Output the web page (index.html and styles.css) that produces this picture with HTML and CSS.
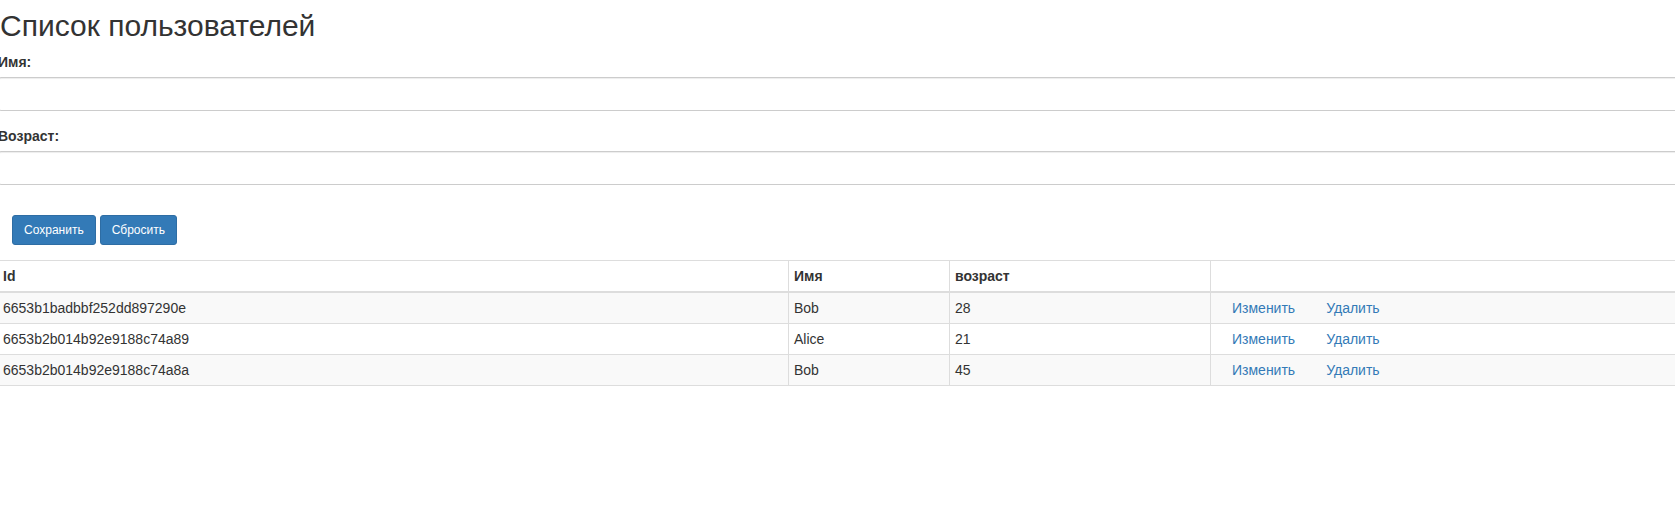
FILE: index.html
```html
<!DOCTYPE html>
<html lang="ru">
<head>
<meta charset="utf-8">
<title>Список пользователей</title>
<link rel="stylesheet" href="styles.css">
</head>
<body>
<div class="page">
  <h2 class="title">Список пользователей</h2>
  <form class="user-form">
    <div class="form-group">
      <label class="form-label" for="name">Имя:</label>
      <input class="form-control" id="name" type="text">
    </div>
    <div class="form-group">
      <label class="form-label" for="age">Возраст:</label>
      <input class="form-control" id="age" type="text">
    </div>
    <div class="actions">
      <button type="button" class="btn">Сохранить</button>
      <button type="button" class="btn">Сбросить</button>
    </div>
  </form>
  <table class="users">
    <thead>
      <tr>
        <th class="col-id">Id</th>
        <th class="col-name">Имя</th>
        <th class="col-age">возраст</th>
        <th class="col-act"></th>
      </tr>
    </thead>
    <tbody>
      <tr>
        <td>6653b1badbbf252dd897290e</td>
        <td>Bob</td>
        <td>28</td>
        <td class="links"><a href="#" class="link">Изменить</a><a href="#" class="link">Удалить</a></td>
      </tr>
      <tr>
        <td>6653b2b014b92e9188c74a89</td>
        <td>Alice</td>
        <td>21</td>
        <td class="links"><a href="#" class="link">Изменить</a><a href="#" class="link">Удалить</a></td>
      </tr>
      <tr>
        <td>6653b2b014b92e9188c74a8a</td>
        <td>Bob</td>
        <td>45</td>
        <td class="links"><a href="#" class="link">Изменить</a><a href="#" class="link">Удалить</a></td>
      </tr>
    </tbody>
  </table>
</div>
</body>
</html>
```

FILE: styles.css
```css
html, body {
  margin: 0;
  padding: 0;
  overflow: hidden;
  background: #fff;
}

body {
  font-family: "Liberation Sans", Arial, sans-serif;
  font-size: 14px;
  line-height: 20px;
  color: #333;
}

.page {
  margin: 0 -12px 0 -3px;
}

.title {
  font-size: 30px;
  font-weight: 500;
  line-height: 33px;
  margin: 9px 0 10px 3px;
}

.form-group {
  margin-bottom: 15px;
}

.form-label {
  display: block;
  font-weight: bold;
  margin: 0 0 5px 1px;
}

.form-control {
  display: block;
  box-sizing: border-box;
  width: 100%;
  height: 34px;
  padding: 6px 12px;
  font: inherit;
  color: #555;
  background: #fff;
  border: 1px solid #ccc;
  border-radius: 4px;
  box-shadow: inset 0 1px 1px rgba(0, 0, 0, 0.075);
  margin: 0;
}

.actions {
  padding: 15px 0 15px 15px;
  display: flex;
  gap: 4px;
}

.btn {
  font-family: inherit;
  font-size: 12px;
  line-height: 18px;
  padding: 5px 11px;
  color: #fff;
  background: #337ab7;
  border: 1px solid #2e6da4;
  border-radius: 3px;
  cursor: pointer;
}

.users {
  width: 100%;
  border-collapse: collapse;
  border-spacing: 0;
}

.users th,
.users td {
  padding: 5px;
  line-height: 20px;
  text-align: left;
  vertical-align: top;
  border: 1px solid #ddd;
}

.users th {
  font-weight: bold;
  border-bottom: 2px solid #ddd;
  height: 20px;
}

.users tbody tr:nth-child(odd) {
  background: #f9f9f9;
}

.col-id { width: 780px; }
.col-name { width: 150px; }
.col-age { width: 250px; }

.users td.links {
  padding-left: 21px;
}

.link {
  color: #337ab7;
  text-decoration: none;
  padding: 0 12px 0 0;
  margin-right: 19px;
}
```
